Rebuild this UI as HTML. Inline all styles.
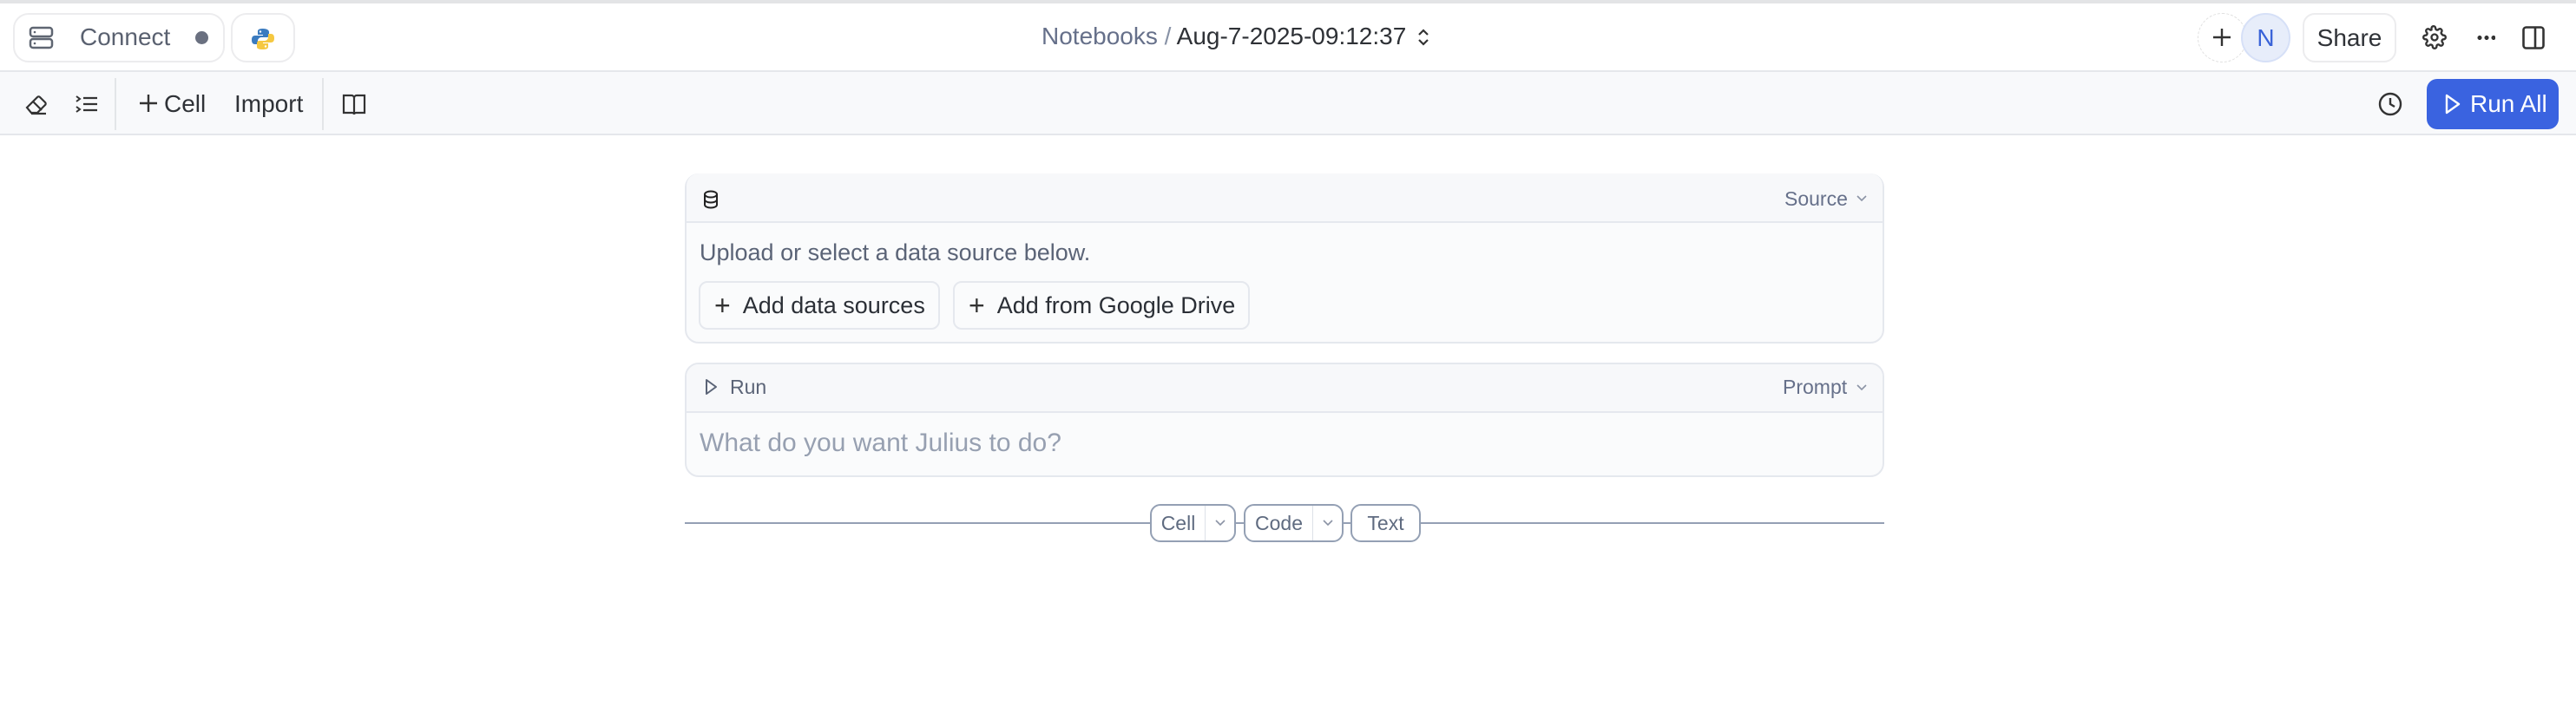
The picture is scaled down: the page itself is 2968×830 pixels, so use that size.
<!DOCTYPE html>
<html><head><style>
*{box-sizing:border-box;margin:0;padding:0}
body{width:2968px;height:830px;background:#fff;font-family:"Liberation Sans",sans-serif;position:relative;overflow:hidden}
.abs{position:absolute}
.topline{left:0;top:0;width:2968px;height:4px;background:#e3e4e6}
.header{left:0;top:4px;width:2968px;height:79px;background:#fff;border-bottom:2px solid #e5e7eb}
.toolbar{left:0;top:83px;width:2968px;height:73px;background:#f8f9fb;border-bottom:2px solid #e5e7eb}
.pill{border:2px solid #ececee;border-radius:18px;background:#fff}
.t{white-space:nowrap}
.card{left:789px;width:1382px;border:2px solid #e5e8ee;border-radius:16px;background:#fafbfc}
.btn{border:2px solid #e5e8ee;border-radius:10px;background:#fafbfc;font-size:27px;color:#2b2f36;display:flex;align-items:center}
.sm{border:2px solid #94a0b4;border-radius:12px;background:#fff;height:44px;top:581px;display:flex;align-items:center;font-size:23px;color:#5f6b80}
</style></head><body>
<div class="abs topline"></div>
<div class="abs header"></div>
<div class="abs toolbar"></div>

<div class="abs pill" style="left:15px;top:15px;width:244px;height:57px"></div>
<svg class="abs" style="left:33px;top:30px" width="30" height="28" viewBox="0 0 30 28"><rect x="2" y="2" width="25" height="10" rx="3" fill="none" stroke="#5f6672" stroke-width="2.5"/><rect x="2" y="15" width="25" height="10" rx="3" fill="none" stroke="#5f6672" stroke-width="2.5"/><circle cx="7" cy="7" r="1.3" fill="#5f6672"/><circle cx="7" cy="20" r="1.3" fill="#5f6672"/></svg>
<div class="abs t" style="left:92px;top:27px;font-size:28px;color:#5a6170">Connect</div>
<div class="abs" style="left:225px;top:36px;width:15px;height:15px;border-radius:50%;background:#6a7080"></div>
<div class="abs pill" style="left:266px;top:15px;width:74px;height:57px"></div>
<svg class="abs" style="left:290px;top:32px" width="26" height="26" viewBox="0 0 26 26"><path d="M13 1c-6 0-6 2-6 4v3h6v1H4c-3 0-4 2-4 5s1 5 4 5h3v-4c0-2 2-4 4-4h6c2 0 3-1 3-3V5c0-2-2-4-7-4z" fill="#3b7bbf"/><path d="M13 25c6 0 6-2 6-4v-3h-6v-1h9c3 0 4-2 4-5s-1-5-4-5h-3v4c0 2-2 4-4 4H9c-2 0-3 1-3 3v4c0 2 2 3 7 3z" fill="#f5c841"/><circle cx="10" cy="4.5" r="1.2" fill="#fff"/><circle cx="16" cy="21.5" r="1.2" fill="#fff"/></svg>

<div class="abs t" style="left:1200px;top:26px;font-size:28px;color:#66708a">Notebooks <span style="color:#8892a6">/</span> <span style="color:#2e3136">Aug-7-2025-09:12:37</span></div>
<svg class="abs" style="left:1632px;top:31px" width="16" height="24" viewBox="0 0 16 24"><path d="M3 9l5-5 5 5M3 15l5 5 5-5" fill="none" stroke="#333" stroke-width="2.2"/></svg>

<div class="abs" style="left:2532px;top:15px;width:57px;height:57px;border:1.5px dashed #e0e0e0;border-radius:50%"></div>
<svg class="abs" style="left:2549px;top:32px" width="22" height="22"><path d="M11 1v20M1 11h20" stroke="#333" stroke-width="2.4"/></svg>
<div class="abs" style="left:2582px;top:15px;width:57px;height:57px;border-radius:50%;background:#e7edfa;border:2px solid #d6e0f7;color:#3a63d8;font-size:28px;text-align:center;line-height:53px">N</div>
<div class="abs pill" style="left:2653px;top:15px;width:108px;height:57px;font-size:28px;color:#2f3237;text-align:center;line-height:53px;border-radius:14px">Share</div>
<svg class="abs" style="left:2791px;top:29px" width="28" height="28" viewBox="0 0 24 24"><path d="M12 15a3 3 0 1 0 0-6 3 3 0 0 0 0 6z" fill="none" stroke="#333" stroke-width="2"/><path d="M19.4 15a1.65 1.65 0 0 0 .33 1.82l.06.06a2 2 0 1 1-2.83 2.83l-.06-.06a1.65 1.65 0 0 0-2.82 1.17V21a2 2 0 1 1-4 0v-.09A1.65 1.65 0 0 0 9 19.4a1.65 1.65 0 0 0-1.82.33l-.06.06a2 2 0 1 1-2.83-2.83l.06-.06A1.65 1.65 0 0 0 3.17 14H3a2 2 0 1 1 0-4h.09A1.65 1.65 0 0 0 4.6 9a1.65 1.65 0 0 0-.33-1.82l-.06-.06a2 2 0 1 1 2.83-2.83l.06.06A1.65 1.65 0 0 0 9 4.6V3a2 2 0 1 1 4 0v.09a1.65 1.65 0 0 0 1 1.51 1.65 1.65 0 0 0 1.82-.33l.06-.06a2 2 0 1 1 2.83 2.83l-.06.06A1.65 1.65 0 0 0 19.4 9V9a1.65 1.65 0 0 0 1.51 1H21a2 2 0 1 1 0 4h-.09a1.65 1.65 0 0 0-1.51 1z" fill="none" stroke="#333" stroke-width="2"/></svg>
<div class="abs" style="left:2853px;top:41px;width:22px;height:5px;background:radial-gradient(circle,#333 2.4px,transparent 2.6px) 0 0/8px 5px repeat-x"></div>
<svg class="abs" style="left:2906px;top:30px" width="26" height="27"><rect x="1.5" y="1.5" width="23" height="24" rx="3" fill="none" stroke="#333" stroke-width="2.6"/><path d="M15 1.5v24" stroke="#333" stroke-width="2.6"/></svg>

<!-- toolbar -->
<svg class="abs" style="left:28px;top:106px" width="30" height="28" viewBox="0 0 30 28"><path d="M3 18L15 6a2 2 0 0 1 3 0l6 6a2 2 0 0 1 0 3l-9 9H8z M10 11l10 10 M8 25h17" fill="none" stroke="#333" stroke-width="2.2"/></svg>
<svg class="abs" style="left:86px;top:108px" width="28" height="24"><path d="M2 3l4 3-4 3M2 15l4 3-4 3" fill="none" stroke="#333" stroke-width="2"/><path d="M10 5h16M10 12h16M10 19h16" stroke="#333" stroke-width="2.2"/></svg>
<div class="abs" style="left:132px;top:90px;width:2px;height:60px;background:#e3e5e8"></div>
<svg class="abs" style="left:160px;top:108px" width="22" height="22"><path d="M11 1v20M1 11h20" stroke="#333" stroke-width="2.4"/></svg>
<div class="abs t" style="left:189px;top:104px;font-size:28px;color:#2f3237">Cell</div>
<div class="abs t" style="left:270px;top:104px;font-size:28px;color:#2f3237">Import</div>
<div class="abs" style="left:371px;top:90px;width:2px;height:60px;background:#e3e5e8"></div>
<svg class="abs" style="left:394px;top:108px" width="28" height="26"><path d="M2 2h9a3 3 0 0 1 3 3v19a2 2 0 0 0-2-2H2zM26 2h-9a3 3 0 0 0-3 3v19a2 2 0 0 1 2-2h10z" fill="none" stroke="#333" stroke-width="2.2"/></svg>
<svg class="abs" style="left:2740px;top:106px" width="28" height="28"><circle cx="14" cy="14" r="12" fill="none" stroke="#333" stroke-width="2.4"/><path d="M14 7v7l5 3" fill="none" stroke="#333" stroke-width="2.4"/></svg>
<div class="abs" style="left:2796px;top:91px;width:152px;height:58px;background:#3a63e0;border-radius:12px"></div>
<svg class="abs" style="left:2816px;top:108px" width="20" height="24"><path d="M3 2l14 10-14 10z" fill="none" stroke="#fff" stroke-width="2.4" stroke-linejoin="round"/></svg>
<div class="abs t" style="left:2846px;top:104px;font-size:28px;color:#fff">Run All</div>

<!-- card 1 -->
<div class="abs card" style="top:200px;height:196px"></div>
<div class="abs" style="left:791px;top:200px;width:1378px;height:57px;border-bottom:2px solid #e5e8ee;background:#f7f8fa;border-radius:14px 14px 0 0"></div>
<svg class="abs" style="left:810px;top:219px" width="18" height="22"><ellipse cx="9" cy="5" rx="7" ry="3.5" fill="none" stroke="#222" stroke-width="2"/><path d="M2 5v12c0 2 3 3.5 7 3.5s7-1.5 7-3.5V5M2 11c0 2 3 3.5 7 3.5s7-1.5 7-3.5" fill="none" stroke="#222" stroke-width="2"/></svg>
<div class="abs t" style="left:2056px;top:216px;font-size:23px;color:#66708a">Source</div>
<svg class="abs" style="left:2138px;top:224px" width="14" height="10"><path d="M2 2l5 5 5-5" fill="none" stroke="#8b93a5" stroke-width="1.6"/></svg>
<div class="abs t" style="left:806px;top:276px;font-size:27px;color:#5b6477">Upload or select a data source below.</div>
<div class="abs btn" style="left:805px;top:324px;width:278px;height:56px;padding-left:16px"><span style="font-size:32px;margin-right:14px;color:#333">+</span>Add data sources</div>
<div class="abs btn" style="left:1098px;top:324px;width:342px;height:56px;padding-left:16px"><span style="font-size:32px;margin-right:14px;color:#333">+</span>Add from Google Drive</div>

<!-- card 2 -->
<div class="abs card" style="top:418px;height:132px"></div>
<div class="abs" style="left:791px;top:420px;width:1378px;height:56px;border-bottom:2px solid #e5e8ee;background:#f7f8fa;border-radius:14px 14px 0 0"></div>
<svg class="abs" style="left:812px;top:436px" width="16" height="20"><path d="M2 2l11 8-11 8z" fill="none" stroke="#5b6477" stroke-width="2" stroke-linejoin="round"/></svg>
<div class="abs t" style="left:841px;top:433px;font-size:23px;color:#5b6477">Run</div>
<div class="abs t" style="left:2054px;top:433px;font-size:23px;color:#66708a">Prompt</div>
<svg class="abs" style="left:2138px;top:442px" width="14" height="10"><path d="M2 2l5 5 5-5" fill="none" stroke="#8b93a5" stroke-width="1.6"/></svg>
<div class="abs t" style="left:806px;top:494px;font-size:30px;color:#97a0b1">What do you want Julius to do?</div>

<!-- divider -->
<div class="abs" style="left:789px;top:602px;width:1382px;height:2px;background:#94a0b4"></div>
<div class="abs sm" style="left:1325px;width:99px"><span style="width:62px;text-align:center;border-right:1px solid #dde1e8;line-height:40px">Cell</span><svg style="margin-left:10px" width="14" height="10"><path d="M2 2l5 5 5-5" fill="none" stroke="#8b93a5" stroke-width="1.6"/></svg></div>
<div class="abs sm" style="left:1433px;width:115px"><span style="width:78px;text-align:center;border-right:1px solid #dde1e8;line-height:40px">Code</span><svg style="margin-left:10px" width="14" height="10"><path d="M2 2l5 5 5-5" fill="none" stroke="#8b93a5" stroke-width="1.6"/></svg></div>
<div class="abs sm" style="left:1556px;width:81px;justify-content:center">Text</div>
</body></html>
